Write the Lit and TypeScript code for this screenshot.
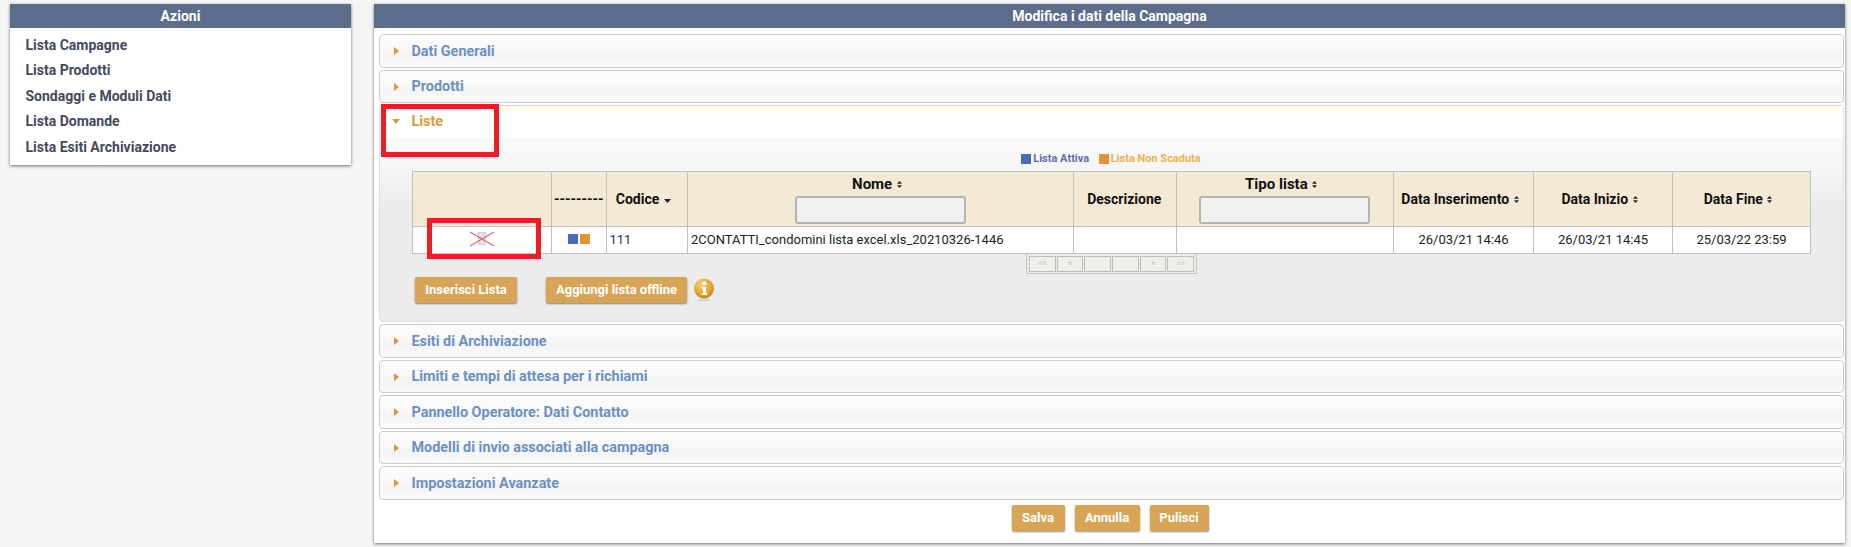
import { LitElement, html, css, svg } from "lit";
import { customElement } from "lit/decorators.js";

const both = svg`<svg class="sort" width="5" height="7" viewBox="0 0 5 7"><path d="M2.5 0 5 2.7H0ZM2.5 7 0 4.3H5Z" fill="#222"/></svg>`;
const down = svg`<svg class="sort" width="7" height="4" viewBox="0 0 7 4"><path d="M0 0H7L3.5 4Z" fill="#222"/></svg>`;
const closed = svg`<svg class="arrow" width="5" height="8" viewBox="0 0 5 8"><path d="M0 0 5 4 0 8Z" fill="#d8973a"/></svg>`;
const open = svg`<svg class="arrow open" width="8" height="5" viewBox="0 0 8 5"><path d="M0 0H8L4 5Z" fill="#d8973a"/></svg>`;

const before = ["Dati Generali", "Prodotti"];
const after = [
  "Esiti di Archiviazione",
  "Limiti e tempi di attesa per i richiami",
  "Pannello Operatore: Dati Contatto",
  "Modelli di invio associati alla campagna",
  "Impostazioni Avanzate",
];
const menu = ["Lista Campagne", "Lista Prodotti", "Sondaggi e Moduli Dati", "Lista Domande", "Lista Esiti Archiviazione"];

@customElement("app-root")
export class AppRoot extends LitElement {
  static styles = css`
    :host { display: block; height: 547px; background: #f5f5f5; font-family: Roboto, "Liberation Sans", sans-serif; font-size: 13px; color: #222; overflow: hidden; }
    .page { display: flex; gap: 23px; padding: 4px 6px 0 10px; align-items: flex-start; }
    .panel { background: #fff; box-shadow: 0 1px 3px rgba(0,0,0,.55); }
    .side { width: 341px; flex: none; height: 161px; }
    .main { flex: 1; height: 539px; }
    .title { height: 24px; line-height: 24px; background: #5c6c8b; color: #fff; font-weight: 700; font-size: 14px; text-align: center; }
    .menu { list-style: none; margin: 0; padding: 5px 0 0 15.5px; }
    .menu li { height: 25.4px; line-height: 25.4px; font-size: 14px; font-weight: 700; color: #444a5c; }
    .body { padding: 6px 1px 0 5px; position: relative; }
    .item { height: 33.5px; margin-bottom: 2px; box-sizing: border-box; border: 1px solid #ccc; border-radius: 4px; background: linear-gradient(#fdfdfd, #f8f8f8 50%, #f4f4f4 60%, #fafafa); display: flex; align-items: center; padding: 1px 0 0 14px; font-size: 14.4px; font-weight: 700; color: #6b90c4; }
    .arrow { flex: none; margin-right: 12.5px; }
    .arrow.open { margin-left: -2px; margin-right: 11.5px; }
    .active { margin-bottom: 2px; border: 1px solid #dedede; border-top-color: #f2da63; border-radius: 4px; background: linear-gradient(#f9f9f9 0, #f8f8f8 50px, #ececec 100px); height: 217px; box-sizing: border-box; }
    .ahead { height: 32px; background: #fff; display: flex; align-items: center; padding: 0 0 2px 14px; box-sizing: border-box; font-size: 14.4px; font-weight: 700; color: #d99a3c; }
    .legend { display: flex; justify-content: center; align-items: center; padding: 11px 0 0 0; height: 19px; font-size: 11px; font-weight: 700; color: #5a6fae; margin-left: 32px; width: 1398px; }
    .sq { width: 10px; height: 10px; background: #4a6cb8; margin-right: 2px; flex: none; }
    .sq.or { background: #e3942f; margin-left: 9.5px; }
    .legend .nonsc { color: #eeb04d; }
    table { border-collapse: collapse; table-layout: fixed; width: 1398px; margin: 3px 0 0 32px; font-size: 13px; }
    col.c1 { width: 139px; } col.c2 { width: 54.5px; } col.c3 { width: 81.5px; } col.c4 { width: 386px; }
    col.c5 { width: 102.5px; } col.c6 { width: 217.5px; } col.c7 { width: 140px; } col.c8 { width: 139px; } col.c9 { width: 138px; }
    th, td { border: 1px solid #c0c0c0; padding: 0; text-align: center; }
    th { background: #f4e9d4; height: 54px; font-size: 14px; font-weight: 700; color: #111; white-space: nowrap; }
    th.sortable { padding-right: 7px; }
    th.desc { padding-right: 1px; }
    td { background: #fff; height: 24px; padding-bottom: 2px; color: #222; }
    td.l { text-align: left; padding-left: 3px; white-space: nowrap; }
    td.code { color: #1f2f6f; }
    .sort { margin-left: 1px; vertical-align: 1px; }
    .filter { display: block; box-sizing: border-box; width: 171px; height: 28px; margin: 3px 0 0; background: #f0f0f0; border: 2px solid #b4b4b4; border-radius: 3px; }
    .stack { display: flex; flex-direction: column; align-items: center; }
    .hn { height: 17px; line-height: 17px; padding: 1px 7px 0 0; font-size: 15px; }
    .bars { display: flex; justify-content: center; gap: 2px; }
    .bars i { width: 10px; height: 10px; background: #4a6cb8; display: block; }
    .bars i + i { background: #e3942f; }
    .del { display: block; margin: 0 auto; }
    .pager { display: flex; gap: 1px; width: 171px; box-sizing: border-box; height: 20px; padding: 2px; margin: 0 0 0 646px; border: 1px solid #c4c4c4; border-top: 0; }
    .pager span { flex: 1; height: 16px; box-sizing: border-box; border: 1px solid #bfbfb8; background: #eeeeea; color: #c8c8c4; font-size: 9px; line-height: 13px; text-align: center; }
    .acts { display: flex; align-items: center; padding: 3px 0 0 35px; }
    .btn { display: inline-block; height: 26px; line-height: 26px; box-sizing: border-box; background: #d8a557; color: #fff; font-size: 13px; font-weight: 700; border-radius: 2px; box-shadow: 0 1px 2px rgba(0,0,0,.45); text-align: center; }
    .b1 { width: 102px; } .b2 { width: 141px; margin-left: 29px; } .info { margin-left: 6px; }
    .foot { display: flex; justify-content: center; gap: 10px; padding: 3px 0 0 1px; }
    .s { width: 53px; } .a { width: 65px; } .p { width: 59px; }
    .red { position: absolute; box-sizing: border-box; border: 5px solid #ee1c25; pointer-events: none; }
    .r1 { left: 7px; top: 76px; width: 118px; height: 53px; }
    .r2 { left: 53px; top: 190px; width: 114px; height: 41px; }
  `;

  render() {
    return html`<div class="page">
      <aside class="panel side">
        <div class="title">Azioni</div>
        <ul class="menu">${menu.map((m) => html`<li>${m}</li>`)}</ul>
      </aside>
      <main class="panel main">
        <div class="title">Modifica i dati della Campagna</div>
        <div class="body">
          ${before.map((t) => html`<div class="item">${closed}${t}</div>`)}
          <section class="active">
            <div class="ahead">${open}Liste</div>
            <div class="legend"><span class="sq"></span>Lista Attiva<span class="sq or"></span><span class="nonsc">Lista Non Scaduta</span></div>
            <table>
              <colgroup><col class="c1"/><col class="c2"/><col class="c3"/><col class="c4"/><col class="c5"/><col class="c6"/><col class="c7"/><col class="c8"/><col class="c9"/></colgroup>
              <thead><tr>
                <th></th><th>---------</th><th class="sortable">Codice ${down}</th>
                <th><div class="stack"><span class="hn">Nome ${both}</span><span class="filter"></span></div></th>
                <th class="desc">Descrizione</th>
                <th><div class="stack"><span class="hn">Tipo lista ${both}</span><span class="filter"></span></div></th>
                <th class="sortable">Data Inserimento ${both}</th><th class="sortable">Data Inizio ${both}</th><th class="sortable">Data Fine ${both}</th>
              </tr></thead>
              <tbody><tr>
                <td><svg class="del" width="26" height="16" viewBox="0 0 26 16"><path d="M9 1.5H17L16 14H10Z" fill="#e2e2e2" stroke="#cfcfcf"/><path d="M1 1 25 15M25 1 1 15" stroke="#e0606a" stroke-width="1.1" fill="none"/></svg></td>
                <td><div class="bars"><i></i><i></i></div></td>
                <td class="l code">111</td>
                <td class="l">2CONTATTI_condomini lista excel.xls_20210326-1446</td>
                <td></td><td></td>
                <td>26/03/21 14:46</td><td>26/03/21 14:45</td><td>25/03/22 23:59</td>
              </tr></tbody>
            </table>
            <div class="pager"><span>««</span><span>«</span><span></span><span></span><span>»</span><span>»»</span></div>
            <div class="acts">
              <span class="btn b1">Inserisci Lista</span><span class="btn b2">Aggiungi lista offline</span>
              <svg class="info" width="22" height="24" viewBox="0 0 22 24"><defs><radialGradient id="g" cx=".4" cy=".3" r=".8"><stop offset="0" stop-color="#f6d67e"/><stop offset=".6" stop-color="#e5a22c"/><stop offset="1" stop-color="#b9791a"/></radialGradient></defs><ellipse cx="11" cy="22" rx="7" ry="1.5" fill="#d4d4d4"/><circle cx="11" cy="10.5" r="10" fill="url(#g)"/><circle cx="11.5" cy="5.5" r="1.9" fill="#fff"/><path d="M8.5 9H13V15.5H14.5V17H8.5V15.5H10V10.5H8.5Z" fill="#fff"/></svg>
            </div>
          </section>
          ${after.map((t) => html`<div class="item">${closed}${t}</div>`)}
          <div class="red r1"></div><div class="red r2"></div>
        </div>
        <div class="foot"><span class="btn s">Salva</span><span class="btn a">Annulla</span><span class="btn p">Pulisci</span></div>
      </main>
    </div>`;
  }
}
